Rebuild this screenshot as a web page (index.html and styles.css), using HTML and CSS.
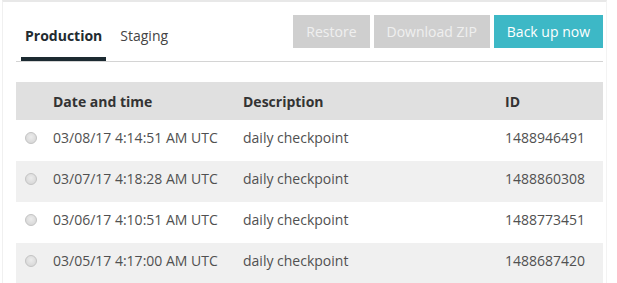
FILE: index.html
```html
<!DOCTYPE html>
<html lang="en">
<head>
    <meta charset="UTF-8">
    <meta name="viewport" content="width=device-width, initial-scale=1.0">
    <title>Backups</title>
    <link rel="stylesheet" href="styles.css">
</head>
<body>
    <div class="backups">
        <div class="toolbar">
            <nav class="tabs">
                <a class="tab active" href="#">Production</a>
                <a class="tab" href="#">Staging</a>
            </nav>
            <div class="actions">
                <button class="btn btn-disabled" disabled>Restore</button>
                <button class="btn btn-disabled" disabled>Download ZIP</button>
                <button class="btn btn-primary">Back up now</button>
            </div>
        </div>

        <table class="backup-table">
            <thead>
                <tr>
                    <th class="col-select"></th>
                    <th class="col-date">Date and time</th>
                    <th class="col-desc">Description</th>
                    <th class="col-id">ID</th>
                </tr>
            </thead>
            <tbody>
                <tr>
                    <td class="col-select"><span class="radio"></span></td>
                    <td>03/08/17 4:14:51 AM UTC</td>
                    <td>daily checkpoint</td>
                    <td>1488946491</td>
                </tr>
                <tr>
                    <td class="col-select"><span class="radio"></span></td>
                    <td>03/07/17 4:18:28 AM UTC</td>
                    <td>daily checkpoint</td>
                    <td>1488860308</td>
                </tr>
                <tr>
                    <td class="col-select"><span class="radio"></span></td>
                    <td>03/06/17 4:10:51 AM UTC</td>
                    <td>daily checkpoint</td>
                    <td>1488773451</td>
                </tr>
                <tr>
                    <td class="col-select"><span class="radio"></span></td>
                    <td>03/05/17 4:17:00 AM UTC</td>
                    <td>daily checkpoint</td>
                    <td>1488687420</td>
                </tr>
            </tbody>
        </table>
    </div>
</body>
</html>
```

FILE: styles.css
```css
:root {
    --teal: #3db8c6;
    --dark-text: #222b30;
    --body-text: #505050;
    --header-bg: #e0e0e0;
    --stripe-bg: #f0f0f0;
    --line: #d4d4d4;
}

* {
    box-sizing: border-box;
}

body {
    margin: 0;
    font-family: 'Open Sans', 'Liberation Sans', sans-serif;
    font-size: 14px;
    color: var(--body-text);
    background: #fff;
}

.backups {
    width: 605px;
    height: 283px;
    margin-left: 2px;
    border-top: 2px solid #e8e8e8;
    border-left: 1px solid #f0f0f0;
    border-right: 1px solid #f3f3f3;
}

.toolbar {
    display: flex;
    justify-content: space-between;
    align-items: flex-end;
    height: 60px;
    margin: 0 0 0 13px;
    width: 587px;
    border-bottom: 1px solid var(--line);
}

.tabs {
    display: flex;
    gap: 10px;
    margin-left: 5px;
}

.tab {
    display: block;
    padding: 0 4px 11px;
    line-height: 20px;
    color: #444;
    text-decoration: none;
    border-bottom: 4px solid transparent;
}

.tab.active {
    font-weight: 700;
    color: var(--dark-text);
    border-bottom-color: #1c2a31;
}

.actions {
    align-self: flex-start;
    display: flex;
    gap: 4px;
    margin-top: 13px;
}

.btn {
    height: 33px;
    padding: 0 13px;
    border: none;
    font-family: inherit;
    font-size: 14px;
    color: #fff;
    cursor: pointer;
}

.btn-disabled {
    background: #cfcfcf;
    color: #efefef;
    cursor: default;
}

.btn-primary {
    background: var(--teal);
}

.backup-table {
    width: 587px;
    margin: 20px 0 0 13px;
    border-collapse: collapse;
}

.backup-table th {
    height: 38px;
    padding: 0;
    text-align: left;
    font-weight: 700;
    color: #333;
    background: var(--header-bg);
}

.backup-table td {
    height: 41px;
    padding: 0 0 6px;
    color: var(--body-text);
}

.backup-table tbody tr:nth-child(even) td {
    background: var(--stripe-bg);
}

.backup-table .col-select {
    width: 37px;
    padding-left: 9px;
}

.col-date {
    width: 190px;
}

.col-desc {
    width: 262px;
}

.radio {
    display: block;
    width: 12px;
    height: 12px;
    border-radius: 50%;
    border: 1px solid #c4c4c4;
    background: radial-gradient(circle at 50% 40%, #ececec, #d2d2d2);
}
```
